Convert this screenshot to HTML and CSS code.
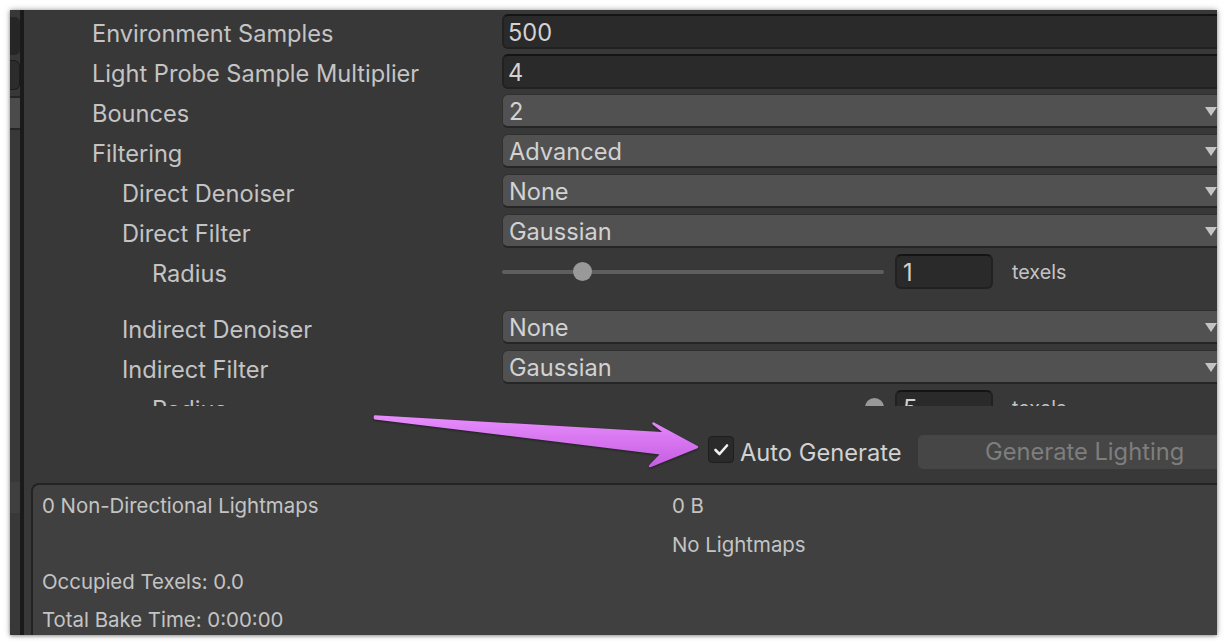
FILE: index.html
```html
<!DOCTYPE html>
<html>
<head>
<meta charset="utf-8">
<link rel="stylesheet" href="styles.css">
</head>
<body>
<div class="window">
  <div class="side">
    <div class="side-gap1"></div>
    <div class="side-tab"></div>
    <div class="side-gap2"></div>
    <div class="side-field"></div>
    <div class="side-gap3"></div>
    <div class="side-sel"></div>
    <div class="side-fill"></div>
    <div class="side-hl"></div>
  </div>
  <div class="divider"></div>
  <div class="main">
    <div class="scroll">
      <div class="row"><div class="label l0">Environment Samples</div><div class="value"><div class="field">500</div></div></div>
      <div class="row"><div class="label l0">Light Probe Sample Multiplier</div><div class="value"><div class="field">4</div></div></div>
      <div class="row"><div class="label l0">Bounces</div><div class="value"><div class="dropdown"><span>2</span><span class="caret"></span></div></div></div>
      <div class="row"><div class="label l0">Filtering</div><div class="value"><div class="dropdown"><span>Advanced</span><span class="caret"></span></div></div></div>
      <div class="row"><div class="label l1">Direct Denoiser</div><div class="value"><div class="dropdown"><span>None</span><span class="caret"></span></div></div></div>
      <div class="row"><div class="label l1">Direct Filter</div><div class="value"><div class="dropdown"><span>Gaussian</span><span class="caret"></span></div></div></div>
      <div class="row row-gap"><div class="label l2">Radius</div>
        <div class="value slider-value">
          <div class="slider"><div class="track"></div><div class="thumb" style="left:21.2%"></div></div>
          <div class="num">1</div>
          <div class="unit">texels</div>
        </div>
      </div>
      <div class="row"><div class="label l1">Indirect Denoiser</div><div class="value"><div class="dropdown"><span>None</span><span class="caret"></span></div></div></div>
      <div class="row"><div class="label l1">Indirect Filter</div><div class="value"><div class="dropdown"><span>Gaussian</span><span class="caret"></span></div></div></div>
      <div class="row"><div class="label l2">Radius</div>
        <div class="value slider-value">
          <div class="slider"><div class="track"></div><div class="thumb" style="left:97.4%"></div></div>
          <div class="num">5</div>
          <div class="unit">texels</div>
        </div>
      </div>
    </div>
    <div class="toolbar">
      <div class="checkbox">
        <svg width="26" height="27" viewBox="0 0 26 27"><path d="M7.5 14 L11.5 18 L19 9.5" fill="none" stroke="#f0f0f0" stroke-width="2.6" stroke-linecap="round" stroke-linejoin="round"/></svg>
      </div>
      <div class="check-label">Auto Generate</div>
      <div class="button">Generate Lighting</div>
    </div>
    <div class="stats">
      <div class="stat">0 Non-Directional Lightmaps</div><div class="stat">0 B</div>
      <div class="stat"></div><div class="stat">No Lightmaps</div>
      <div class="stat">Occupied Texels: 0.0</div><div class="stat"></div>
      <div class="stat">Total Bake Time: 0:00:00</div><div class="stat"></div>
    </div>
  </div>
</div>
<svg class="arrow" width="360" height="80" viewBox="360 400 360 80">
  <defs>
    <linearGradient id="ag" x1="0" y1="0" x2="0" y2="1">
      <stop offset="0" stop-color="#e78cfc"/>
      <stop offset="1" stop-color="#c65ee3"/>
    </linearGradient>
  </defs>
  <path d="M375 416.6 L666 433.5 L653.5 423.5 L697 447 L650 466 L662 453.5 L375 418.2 Z" fill="url(#ag)" stroke="url(#ag)" stroke-width="2.5" stroke-linejoin="round"/>
</svg>
</body>
</html>
```

FILE: styles.css
```css
* { box-sizing: border-box; }
html, body { margin: 0; padding: 0; }
body {
  background: #ffffff;
  width: 1228px;
  height: 644px;
  overflow: hidden;
  position: relative;
  font-family: Inter, "Noto Sans", sans-serif;
}
.window {
  margin: 10px 0 0 10px;
  width: 1207px;
  height: 625px;
  display: flex;
  background: #383838;
  box-shadow: 0 0 6px rgba(0,0,0,0.35), 0 1px 3px rgba(0,0,0,0.25);
  overflow: hidden;
}
.side {
  width: 10px;
  flex-shrink: 0;
  display: flex;
  flex-direction: column;
  background: #383838;
}
.side-gap1 { height: 7px; }
.side-tab { height: 38px; background: #262626; border-radius: 0 5px 5px 0; }
.side-gap2 { height: 5px; }
.side-field { height: 30px; background: #2c2c2c; border: 1px solid #1c1c1c; border-left: 0; border-radius: 0 6px 6px 0; }
.side-gap3 { height: 6px; }
.side-sel { height: 34px; background: #4b4b4b; border-top: 2px solid #262626; border-bottom: 2px solid #262626; }
.side-fill { height: 352px; }
.side-hl { height: 31px; background: #3f3f3f; }
.divider { width: 4px; flex-shrink: 0; background: #1a1a1a; }
.main {
  flex: 1;
  min-width: 0;
  display: flex;
  flex-direction: column;
  overflow: hidden;
}
.scroll {
  height: 396px;
  flex-shrink: 0;
  overflow: hidden;
  padding-top: 4px;
}
.row {
  display: flex;
  height: 35px;
  margin-bottom: 5px;
  align-items: center;
}
.row-gap { margin-bottom: 21px; }
.label {
  width: 478px;
  flex-shrink: 0;
  font-size: 23.6px;
  color: #c4c4c4;
  white-space: nowrap;
  padding-top: 3px;
}
.l0 { padding-left: 68px; }
.l1 { padding-left: 98px; }
.l2 { padding-left: 128px; }
.value {
  width: 724px;
  flex-shrink: 0;
  height: 35px;
}
.field {
  height: 35px;
  background: #2a2a2a;
  border: 2px solid #212121;
  border-top-color: #141414;
  border-radius: 6px;
  color: #d2d2d2;
  font-size: 23.6px;
  line-height: 33px;
  padding-left: 4px;
  overflow: hidden;
}
.dropdown {
  height: 34px;
  background: #515151;
  border: 1px solid #303030;
  border-bottom: 2px solid #262626;
  border-radius: 6px;
  color: #d2d2d2;
  font-size: 23.6px;
  display: flex;
  align-items: center;
  justify-content: space-between;
  padding: 1px 6px 0 6px;
}
.caret {
  width: 0;
  height: 0;
  border-left: 6px solid transparent;
  border-right: 6px solid transparent;
  border-top: 9px solid #c4c4c4;
  margin-right: 2px;
}
.slider-value {
  display: flex;
  align-items: center;
}
.slider {
  position: relative;
  width: 382px;
  height: 35px;
  flex-shrink: 0;
  display: flex;
  align-items: center;
}
.track {
  width: 100%;
  height: 4px;
  background: #5e5e5e;
  border-radius: 2px;
}
.thumb {
  position: absolute;
  top: 8px;
  width: 19px;
  height: 19px;
  margin-left: -9.5px;
  border-radius: 50%;
  background: #999999;
}
.num {
  width: 98px;
  height: 35px;
  margin-left: 11px;
  background: #2a2a2a;
  border: 2px solid #212121;
  border-top-color: #141414;
  border-radius: 6px;
  color: #d2d2d2;
  font-size: 23.6px;
  line-height: 33px;
  padding-left: 6px;
  flex-shrink: 0;
  overflow: hidden;
}
.unit {
  margin-left: 19px;
  font-size: 19.8px;
  color: #c4c4c4;
}
.toolbar {
  height: 77px;
  flex-shrink: 0;
  display: flex;
  align-items: flex-start;
  padding: 29px 0 0 684px;
}
.checkbox {
  width: 26px;
  height: 27px;
  margin-top: 1px;
  background: #2a2a2a;
  border: 1px solid #1e1e1e;
  border-radius: 4px;
  flex-shrink: 0;
  display: flex;
  align-items: center;
  justify-content: center;
}
.checkbox svg { display: block; flex-shrink: 0; }
.check-label {
  margin-left: 6px;
  font-size: 23.7px;
  color: #d2d2d2;
  line-height: 35px;
  white-space: nowrap;
}
.button {
  margin-left: 16px;
  width: 334px;
  height: 34px;
  flex-shrink: 0;
  background: #464646;
  border-radius: 5px;
  color: #7e7e7e;
  font-size: 23.7px;
  line-height: 34px;
  text-align: center;
  white-space: nowrap;
}
.stats {
  flex: 1;
  margin-left: 7px;
  background: #404040;
  border-top: 2px solid #232323;
  border-left: 2px solid #232323;
  border-radius: 8px 0 0 0;
  display: grid;
  grid-template-columns: 630px 1fr;
  grid-template-rows: 39px 37px 38px 38px;
  padding: 1px 0 0 9px;
}
.stat {
  font-size: 20.4px;
  color: #c4c4c4;
  line-height: 40px;
  white-space: nowrap;
}
.arrow {
  position: absolute;
  left: 360px;
  top: 400px;
  filter: drop-shadow(0 1px 1px rgba(0,0,0,0.45));
  overflow: visible;
}
```
